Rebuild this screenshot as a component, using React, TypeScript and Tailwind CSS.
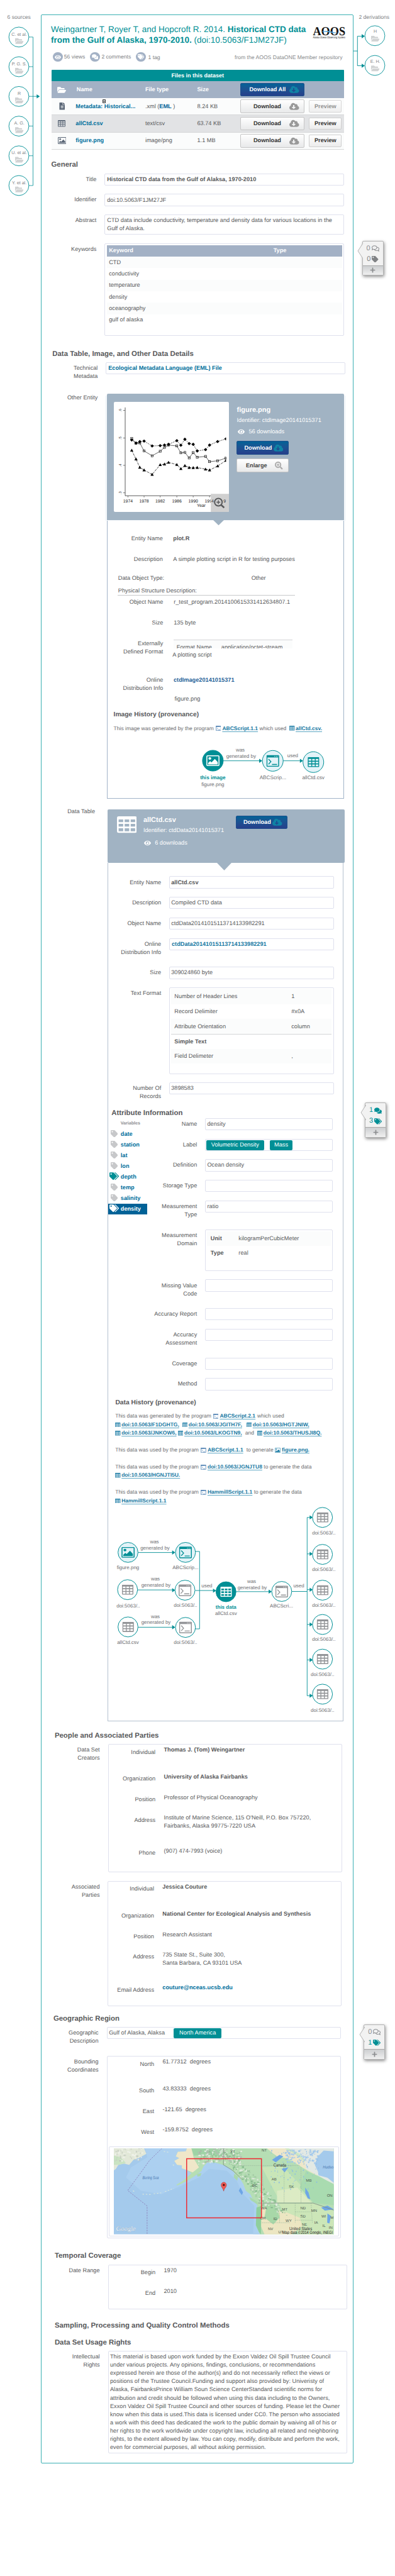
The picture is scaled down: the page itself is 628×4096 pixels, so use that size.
import React from "react";
import {
  FaFolderOpen, FaFileAlt, FaCloudDownloadAlt, FaEye, FaComments, FaRegComments, FaTag, FaTags, FaPlus, FaSearchPlus,
} from "react-icons/fa";

const TEAL = "#008f95";
const PALE = "#e3f3f8";
const GREY = "#939598";

type IconProps = { x?: number; y?: number; w: number; h?: number; color?: string; className?: string };

function GridIcon({ x, y, w, h, color = "currentColor", className }: IconProps) {
  return (
    <svg x={x} y={y} width={w} height={h ?? w} viewBox="0 0 24 24" preserveAspectRatio="none" className={className}>
      <path fill={color} fillRule="evenodd" d="M2 0H22Q24 0 24 2V22Q24 24 22 24H2Q0 24 0 22V2Q0 0 2 0ZM2 4.5V8.5H7.5V4.5ZM9.3 4.5V8.5H14.8V4.5ZM16.6 4.5V8.5H22V4.5ZM2 11V15H7.5V11ZM9.3 11V15H14.8V11ZM16.6 11V15H22V11ZM2 17.5V21.7H7.5V17.5ZM9.3 17.5V21.7H14.8V17.5ZM16.6 17.5V21.7H22V17.5Z" />
    </svg>
  );
}

function TerminalIcon({ x, y, w, h, color = "currentColor", className }: IconProps) {
  return (
    <svg x={x} y={y} width={w} height={h ?? w} viewBox="0 0 24 22" preserveAspectRatio="none" className={className}>
      <rect x="1" y="1" width="22" height="20" rx="1" fill="none" stroke={color} strokeWidth="1.8" />
      <rect x="1" y="1" width="22" height="3.6" fill={color} />
      <path d="M15 2.7h1.4M18 2.7h1.4M21 2.7h1" stroke="#fff" strokeWidth="1.2" />
      <path d="M4 7.5L8.5 12.3L4 17.2M10.5 17.6H20" fill="none" stroke={color} strokeWidth="1.6" />
    </svg>
  );
}

function PictureIcon({ x, y, w, h, color = "currentColor", className }: IconProps) {
  return (
    <svg x={x} y={y} width={w} height={h ?? w} viewBox="0 0 24 22" preserveAspectRatio="none" className={className}>
      <rect x="1" y="1" width="22" height="20" rx="1.2" fill="none" stroke={color} strokeWidth="1.8" />
      <circle cx="6.4" cy="6.4" r="2.6" fill={color} />
      <path d="M3.3 18.7V16L7 12L9.5 14.5L15.5 7.5L20.7 14V18.7Z" fill={color} />
    </svg>
  );
}

/* ---------- buttons ---------- */

function DownloadButton({ label, className, primary }: { label: string; className: string; primary?: boolean }) {
  return (
    <div
      className={
        "flex items-center justify-between rounded-[2px] border font-bold " +
        (primary
          ? "border-[#1f4f8c] bg-linear-to-b from-[#006297] to-[#263f8b] text-white "
          : "border-[#c6c6c6] bg-linear-to-b from-white to-[#e8e9ea] text-[#333] ") + className
      }
    >
      <span className="whitespace-nowrap">{label}</span>
      <FaCloudDownloadAlt className={"h-[12.5px] w-[15.5px] shrink-0 " + (primary ? "text-[#0f83a5]" : "text-[#999]")} />
    </div>
  );
}

function Preview({ faded }: { faded?: boolean }) {
  return (
    <div className={"ml-[7.4px] flex h-[19.4px] w-[52px] items-center justify-center rounded-[2px] border border-[#cfcfcf] bg-linear-to-b from-white to-[#ececec] font-bold " + (faded ? "text-[#777] opacity-80" : "text-[#333]")}>
      Preview
    </div>
  );
}

/* ---------- form rows ---------- */

function Field({ label, row, labelBox, box, children }: { label: React.ReactNode; row: string; labelBox: string; box: string; children?: React.ReactNode }) {
  return (
    <div className={"flex shrink-0 items-start " + row}>
      <div className={"shrink-0 pt-[3.1px] text-right " + labelBox}>{label}</div>
      <div className={"shrink-0 rounded-[2px] border border-[#dfe1ee] " + box}>{children}</div>
    </div>
  );
}

function Inner({ label, row, off, children }: { label: string; row: string; off: string; children: React.ReactNode }) {
  return (
    <div className={"flex items-start " + row}>
      <div className={"shrink-0 pt-[3.3px] text-right " + off}>{label}</div>
      <div className="ml-[13.3px]">{children}</div>
    </div>
  );
}

function Heading({ className, children }: { className: string; children: React.ReactNode }) {
  return <h2 className={"shrink-0 text-[11.4px] leading-[14px] font-bold whitespace-nowrap text-[#58595b] " + className}>{children}</h2>;
}

function Tag({ className, children }: { className: string; children: React.ReactNode }) {
  return <span className={"flex items-center justify-center rounded-[2px] bg-[#008f95] whitespace-nowrap text-white " + className}>{children}</span>;
}

function Prov({ icon, children, className = "" }: { icon: "t" | "g" | "p"; children: React.ReactNode; className?: string }) {
  return (
    <span className={"inline-flex items-center font-bold text-[#1779a3] " + className}>
      {icon === "t" && <TerminalIcon w={8.6} h={8} className="mr-[2px] text-[#2f6aa5]" />}
      {icon === "g" && <GridIcon w={8.4} h={7.6} className="mr-[1.6px]" />}
      {icon === "p" && <PictureIcon w={9} h={8} className="mr-[2px]" />}
      <span className="underline decoration-[#5fa8c4] underline-offset-[1.5px]">{children}</span>
    </span>
  );
}

/* ---------- diagram pieces ---------- */

function T({ x, y, s = 8, fill = "#6d6e71", anchor = "middle", bold, children }: { x: number; y: number; s?: number; fill?: string; anchor?: "middle" | "start" | "end"; bold?: boolean; children: string }) {
  return (
    <text x={x} y={y + s * 0.35} fontSize={s} fill={fill} textAnchor={anchor} fontWeight={bold ? 700 : 400}>
      {children}
    </text>
  );
}

function Head({ x, y }: { x: number; y: number }) {
  return <path d={`M${x - 5} ${y - 3.3}L${x} ${y}L${x - 5} ${y + 3.3}Z`} fill={TEAL} />;
}

function Node({ x, y, kind, tone = "plain", r = 15.9 }: { x: number; y: number; kind: "grid" | "term" | "pic"; tone?: "plain" | "pale" | "solid"; r?: number }) {
  const fill = tone === "solid" ? TEAL : tone === "pale" ? PALE : "#fff";
  const color = tone === "solid" ? "#fff" : tone === "pale" ? TEAL : GREY;
  return (
    <g>
      <circle cx={x} cy={y} r={r} fill={fill} stroke={TEAL} strokeWidth="1" />
      {kind === "grid" && <GridIcon x={x - 9} y={y - 8} w={18.4} h={16} color={color} />}
      {kind === "term" && <TerminalIcon x={x - 10.2} y={y - 9.3} w={20.4} h={18.8} color={color} />}
      {kind === "pic" && <PictureIcon x={x - 10.4} y={y - 8.5} w={21} h={17} color={color} />}
    </g>
  );
}

function Folder({ x, y, label, ly, fy }: { x: number; y: number; label: string; ly: number; fy: number }) {
  return (
    <g>
      <circle cx={x} cy={y} r="15.9" fill="#fff" stroke={TEAL} strokeWidth="0.9" />
      <T x={x + 0.6} y={ly} s={7.1} fill="#808285">{label}</T>
      <FaFolderOpen x={x - 6.2} y={fy - 6.8} size={13.6} color="#d1d3d4" />
    </g>
  );
}

/* ---------- comment / tag widgets ---------- */

function Widget({ comments, tags, className, top }: { comments: number; tags: number; className: string; top: string }) {
  const on = "text-[#008f95]";
  const off = "text-[#8c8e91]";
  return (
    <div className={"relative flex h-[55.6px] w-[34px] shrink-0 flex-col rounded-[2px] border border-[#b3b3b3] bg-[#f2f2f2] text-[11px] leading-[13px] shadow-[1px_2px_5px_rgba(0,0,0,0.45)] " + className}>
      <svg className={"absolute left-[-8.5px] " + top} width="9" height="24" viewBox="0 0 9 24">
        <path d="M9 0L1 12L9 24" fill="#f2f2f2" stroke="#b3b3b3" strokeWidth="1" />
      </svg>
      <div className={"mt-[4.5px] flex h-[14px] items-center justify-center gap-[2px] " + (comments ? on : off)}>
        <span>{comments}</span>
        {comments ? <FaComments size={12} /> : <FaRegComments size={12} />}
      </div>
      <div className={"mt-[3px] flex h-[14px] items-center justify-center gap-[2px] " + (tags ? on : "text-[#808285]")}>
        <span>{tags}</span>
        {tags ? <FaTags size={12} /> : <FaTag size={10.5} />}
      </div>
      <div className="mt-auto flex h-[15.5px] items-center justify-center border-t border-[#aaa] bg-linear-to-b from-[#cdcfd1] to-[#f0f0f0] text-[#8a8c8e]">
        <FaPlus size={9} />
      </div>
    </div>
  );
}

/* ---------- chart ---------- */

const cx = (v: number) => (v - 451) * 0.4005;
const cy = (v: number) => (v - 298) * 0.23363;
const XS = [522, 539, 554, 571, 603, 635, 652, 668, 701, 717, 733, 750, 766, 782, 815, 831, 863, 896];
const DIAMOND = [557, 578, 569, 565, 598, 596, 592, 587, 562, 593, 553, 582, 587, 632, 623, 592, 568, 550];
const SQUARE = [547, 580, 578, 632, 665, 634, 608, 592, 598, 645, 642, 680, 643, 675, 669, 705, 699, 681];
const TRIANGLE = [628, 688, 744, 762, 792, 726, 722, 710, 725, 753, 732, 745, 746, 745, 756, 762, 735, 697];
const line = (ys: number[]) => ys.map((y, i) => `${cx(XS[i])},${cy(y)}`).join(" ");

function Chart() {
  return (
    <svg width="183" height="175.7" viewBox="0 0 183 175.7" className="block">
      <path d={`M${cx(496)} ${cy(336)}V${cy(937)}H${cx(896)}`} fill="none" stroke="#333" strokeWidth="0.8" />
      {[356, 544, 730, 917].map((y, i) => (
        <g key={y}>
          <path d={`M${cx(488)} ${cy(y)}H${cx(496)}`} stroke="#555" strokeWidth="0.8" />
          <text transform={`translate(${cx(480)} ${cy(y)}) rotate(-90)`} fontSize="5.8" textAnchor="middle" fill="#222">{[".6", ".5", ".4", ".3"][i]}</text>
        </g>
      ))}
      {[507, 571, 635, 701, 766, 831, 896].map((x, i) => (
        <g key={x}>
          <path d={`M${cx(x)} ${cy(937)}V${cy(948)}`} stroke="#555" strokeWidth="0.8" />
          {i < 6 && <T x={cx(x)} y={cy(974)} s={6.9} fill="#222">{String(1974 + 4 * i)}</T>}
        </g>
      ))}
      <T x={cx(798)} y={cy(1002)} s={6.9} fill="#222">Year</T>
      <polyline points={line(DIAMOND)} fill="none" stroke="#222" strokeWidth="0.8" strokeDasharray="2 1.2" />
      <polyline points={line(SQUARE)} fill="none" stroke="#222" strokeWidth="0.7" />
      <polyline points={line(TRIANGLE)} fill="none" stroke="#222" strokeWidth="0.8" strokeDasharray="4 1.4" />
      {XS.map((x, i) => (
        <g key={x}>
          <rect x={cx(x) - 1.6} y={cy(SQUARE[i]) - 1.6} width={i === 17 ? 1.8 : 3.2} height="3.2" fill="none" stroke="#111" strokeWidth="0.7" />
          <path d={`M${cx(x)} ${cy(DIAMOND[i]) - 2.7}L${cx(x) + (i === 17 ? 0.3 : 2.7)} ${cy(DIAMOND[i])}L${cx(x)} ${cy(DIAMOND[i]) + 2.7}L${cx(x) - 2.7} ${cy(DIAMOND[i])}Z`} fill="#000" />
          <path d={`M${cx(x)} ${cy(TRIANGLE[i]) - 2.6}L${cx(x) + (i === 17 ? 0.3 : 2.6)} ${cy(TRIANGLE[i]) + 2}H${cx(x) - 2.6}Z`} fill="#000" />
        </g>
      ))}
      <rect x={cx(836)} y={cy(924)} width={28.8} height={30} fill="#d0d0d0" />
      <T x={cx(843)} y={cy(974)} s={6.9} fill="#444">4</T>
      <T x={cx(891)} y={cy(974)} s={6.9} fill="#333">9</T>
      <circle cx={cx(866)} cy={cy(981)} r="6" fill="#d0d0d0" stroke="#58595b" strokeWidth="2" />
      <path d={`M${cx(866) - 3} ${cy(981)}h6M${cx(866)} ${cy(981) - 3}v6`} stroke="#58595b" strokeWidth="1.4" />
      <path d={`M${cx(866) + 4.5} ${cy(981) + 4.5}L${cx(889)} ${cy(1018)}`} stroke="#58595b" strokeWidth="2.6" />
    </svg>
  );
}

/* ---------- map ---------- */

function speckles(n: number, seed: number, at: (t: number, u: number) => [number, number]) {
  let s = seed;
  const rnd = () => ((s = (s * 16807) % 2147483647) / 2147483647);
  return Array.from({ length: n }, () => {
    const [x, y] = at(rnd(), rnd() - 0.5);
    return { x, y, a: rnd() * 7 + 2, b: rnd() * 9 + 3 };
  });
}
const ROCKIES = speckles(260, 77, (t, u) => [900 + t * 190 + u * 95, 905 + t * 350 + u * 60]);
const RANGE = speckles(170, 913, (t, u) => [785 + t * 170, 940 - Math.sin(t * 3.1) * 15 + u * 80]);
const FAR = speckles(60, 41, (t, u) => [455 + t * 110, 925 + u * 70 - t * 10]);
const LAKES = speckles(90, 5, (t, u) => [1075 + t * 190, 890 + (u + 0.5) * 250]);
const NORTH = speckles(110, 17, (t, u) => [1130 + t * 130, 890 + (u + 0.5) * 80]);

function M({ x, y, s = 15, children, fill = "#44514a", italic, len }: { x: number; y: number; s?: number; children: string; fill?: string; italic?: boolean; len?: number }) {
  return (
    <text transform={`translate(${x} ${y}) scale(1 1.5)`} y={s * 0.35} fontSize={s} textAnchor="middle" fill={fill} fontStyle={italic ? "italic" : "normal"} textLength={len} lengthAdjust="spacingAndGlyphs">
      {children}
    </text>
  );
}

function RegionMap() {
  return (
    <svg width="349.6" height="136.7" viewBox="452 887 873 512" preserveAspectRatio="none" className="block">
      <rect x="452" y="887" width="873" height="512" fill="#a4caec" />
      <path d="M575 887L585 940L520 1000L500 1060L560 1140L640 1160L720 1110L790 1060L830 1010L900 1020L940 1080L960 1150L1010 1230L1005 1399H1040V887Z" fill="#acd0f0" />
      <path d="M452 887H572L581 920L556 940L530 955L513 985L492 978L470 985L460 1010L452 1018Z" fill="#e2e8d8" />
      <path d="M452 930L480 940L500 975L470 985L452 985Z" fill="#c9e3c2" />
      <path d="M742 887L738 905L706 908L698 935L712 945L692 962L703 985L722 988L722 1006L742 1016L760 1036L748 1052L728 1078L700 1104L705 1108L740 1084L775 1050L800 1022L808 995L822 972L850 970L885 985L905 998L928 1028L938 1052L952 1066L966 1100L976 1140L994 1160L1006 1200L1022 1225L1018 1262L1021 1310L1016 1345L1026 1380L1032 1399H1325V887Z" fill="#b6deb4" />
      <path d="M742 887L738 905L706 908L698 935L712 945L692 962L703 985L722 988L722 1006L742 1016L765 1030L790 1000L770 950L760 887Z" fill="#efe7c9" />
      <path d="M760 887L770 930L820 925L885 935L885 887Z" fill="#9fd3a6" />
      <path d="M1040 1000L1085 1130L1110 1200L1240 1210L1190 1100L1120 990Z" fill="#c9e6b8" />
      <path d="M1100 1140L1180 1120L1235 1210L1100 1210Z" fill="#dcebc4" />
      <path d="M1060 887L1085 920L1140 950L1190 990L1240 1040L1325 1110V887Z" fill="#cfe8c4" />
      <path d="M1060 887L1100 935L1150 950L1200 1000L1260 1050L1250 1020L1180 930L1130 887Z" fill="#efe7c9" />
      <path d="M1145 887L1190 920L1210 960L1215 1010L1260 1045L1325 1105V887Z" fill="#e3e9e4" />
      <path d="M1215 1020L1260 1050L1325 1100V1225L1245 1212L1190 1120Z" fill="#a9dbb0" />
      <path d="M1325 905L1285 900L1262 935L1250 985L1262 1025L1265 1048L1300 1062L1325 1092Z" fill="#a4caec" />
      <path d="M1105 1215H1250L1325 1260V1399H1190Z" fill="#cce6b8" />
      <path d="M1022 1250L1060 1235L1140 1270L1190 1300L1200 1350L1160 1399H1050L1030 1330Z" fill="#ece6c2" />
      <path d="M1060 1215L1100 1230L1110 1300L1085 1340L1050 1300Z" fill="#a8d8a8" />
      <path d="M1018 1240L1038 1230L1036 1399L1028 1385L1016 1345Z" fill="#8fcf9d" />
      {ROCKIES.map((p, i) => <rect key={i} x={p.x} y={p.y} width={p.a} height={p.b} fill={i % 3 === 0 ? "#e6ebe3" : i % 3 === 1 ? "#7fb58a" : "#a3c9a4"} opacity="0.8" />)}
      {RANGE.map((p, i) => <rect key={i} x={p.x} y={p.y} width={p.a} height={p.b} fill={i % 3 === 0 ? "#b4bab2" : i % 3 === 1 ? "#eef0ec" : "#8fbd92"} opacity="0.85" />)}
      {FAR.map((p, i) => <rect key={i} x={p.x} y={p.y} width={p.a} height={p.b} fill={i % 2 ? "#c2c9bd" : "#f4f5ef"} opacity="0.7" />)}
      {LAKES.map((p, i) => <rect key={i} x={p.x} y={p.y} width={p.a * 0.5} height={p.b * 0.9} fill="#86b9ea" opacity="0.8" />)}
      {NORTH.map((p, i) => <rect key={i} x={p.x} y={p.y} width={p.a * 0.9} height={p.b} fill="#9cc6ee" opacity="0.8" />)}
      <path d="M1080 955L1110 925L1125 935L1095 970ZM1118 1010L1145 1000L1130 1030ZM1212 1120L1225 1150L1232 1190L1222 1185L1212 1155ZM1275 1240L1300 1228L1325 1250L1290 1258ZM1300 1275L1314 1290L1308 1335L1299 1330ZM955 1120L965 1150L960 1165L948 1140Z" fill="#6ea6e6" />
      <path d="M990 1175L1022 1205L1024 1222L995 1195ZM930 1040L945 1055L942 1080L928 1060ZM782 1040L800 1034L796 1052L784 1056Z" fill="#a9d8ad" />
      <path d="M566 1160L600 1162M610 1158L640 1152M655 1145L690 1125M528 1140L536 1146M650 905L668 910M686 985L695 990" stroke="#dce8dc" strokeWidth="4" strokeDasharray="6 7" fill="none" />
      <path d="M643 887L594 958L555 1040L507 1138L584 1230V1399" fill="none" stroke="#8a78b4" strokeWidth="0.8" strokeDasharray="2.4 1.6" vectorEffect="non-scaling-stroke" />
      <path d="M887 887V985L925 1020L960 1070M1025 1213H1243L1325 1255" fill="none" stroke="#7c8a80" strokeWidth="0.8" vectorEffect="non-scaling-stroke" />
      <path d="M925 990H1190M1040 990L1045 1120M1128 990V1213M1195 1000V1213M1172 1213V1330M1172 1265H1235M1172 1315H1240M1235 1213L1240 1330M1040 1330H1150M1110 1270V1330" fill="none" stroke="#9ab79c" strokeWidth="0.6" strokeDasharray="2 1" vectorEffect="non-scaling-stroke" />
      <M x={598} y={1061} s={17} italic fill="#4a78b0" len={65}>Bering Sea</M>
      <M x={1303} y={998} s={16} italic fill="#4a78b0" len={42}>Hudso</M>
      <M x={1111} y={988} s={18} fill="#333" len={51}>Canada</M>
      <M x={1194} y={1364} s={18} fill="#333" len={90}>United States</M>
      <M x={924} y={904}>YT</M>
      <M x={1049} y={897}>NT</M>
      <M x={1088} y={1070}>AB</M>
      <M x={1226} y={1076}>MB</M>
      <M x={1012} y={1109}>BC</M>
      <M x={1157} y={1115}>SK</M>
      <M x={1309} y={1168}>ON</M>
      <M x={1048} y={1244}>WA</M>
      <M x={1131} y={1250}>MT</M>
      <M x={1203} y={1242}>ND</M>
      <M x={1247} y={1258}>MN</M>
      <M x={1203} y={1293}>SD</M>
      <M x={1285} y={1291}>WI</M>
      <M x={1044} y={1301}>OR</M>
      <M x={1093} y={1308}>ID</M>
      <M x={1146} y={1316}>WY</M>
      <M x={1209} y={1338}>NE</M>
      <M x={1255} y={1330}>IA</M>
      <M x={1286} y={1346}>IL</M>
      <M x={1313} y={1358}>IN</M>
      <M x={1074} y={1365}>NV</M>
      <M x={1115} y={1386}>UT</M>
      <M x={1318} y={1301} s={14}>M</M>
      <M x={1221} y={1388} s={17} fill="#222" len={200}>Map data ©2014 Google, INEGI</M>
      <rect x="741" y="949" width="297" height="352" fill="none" stroke="#ee2a33" strokeWidth="1.5" vectorEffect="non-scaling-stroke" />
      <path d="M888 1142C887 1125 878 1120 878 1106A10.5 17 0 0 1 899 1106C899 1120 889 1125 888 1142Z" fill="#ee5a55" stroke="#b8322e" strokeWidth="0.6" vectorEffect="non-scaling-stroke" />
      <ellipse cx="888.5" cy="1105" rx="4" ry="6" fill="#4f1210" />
      <text transform="translate(500 1378) scale(1 1.4)" fontSize="27" textAnchor="middle" fill="#fff" stroke="#7c93a8" strokeWidth="0.5" textLength="78" className="font-['Liberation_Serif',serif]">Google</text>
    </svg>
  );
}

/* ---------- page ---------- */

const LINK = "font-bold text-[#006f9c]";
const F1 = "ml-[13px] min-h-[19.2px] w-[380.5px] px-[2.8px] py-[2.1px]";
const F2 = "ml-[12.4px] min-h-[19.2px] w-[262px] px-[2.6px] py-[2.1px]";
const F3 = "ml-[13.2px] min-h-[19.2px] w-[202.2px] px-[2px] py-[2.1px]";
const L3 = "w-[85px]";

const FILES = [
  { icon: <FaFileAlt className="h-[11.5px] w-[9.5px]" />, name: "Metadata: Historical...", type: ".xml (", size: "8.24 KB", bg: "bg-[#fbfcfc]" },
  { icon: <GridIcon w={12} h={10.4} />, name: "allCtd.csv", type: "text/csv", size: "63.74 KB", bg: "bg-[#e2e3e5]" },
  { icon: <PictureIcon w={13.6} h={11} />, name: "figure.png", type: "image/png", size: "1.1 MB", bg: "bg-[#fbfcfc]" },
];

export default function App() {
  return (
    <div className="flex h-[4096px] w-[628px] items-start overflow-hidden bg-white font-['Liberation_Sans',Arial,sans-serif] text-[9.2px] leading-[13.08px] text-[#58595b] [text-rendering:geometricPrecision]">
      <aside className="w-[65px] shrink-0">
        <svg width="65" height="320" viewBox="0 0 65 320" className="block">
          <T x={30.2} y={27} s={8.6} fill="#808285">6 sources</T>
          <path d="M46 58.9H52.5V295H46M46 106H52.5M46 153.2H60M46 200.4H52.5M46 247.7H52.5" fill="none" stroke={TEAL} strokeWidth="0.8" />
          <Head x={63.3} y={153.2} />
          {["C. et al.", "P. G. S.", "R", "A. G.", "U. et al.", "Y. et al."].map((n, i) => (
            <Folder key={n} x={30} y={58.9 + 47.22 * i} ly={54.1 + 47.22 * i} fy={65.2 + 47.22 * i} label={n} />
          ))}
        </svg>
      </aside>

      <main className="mt-[23px] flex h-[3893.5px] w-[497px] shrink-0 flex-col rounded-[2px] border border-[#3bb0b3]">
        <header className="h-[87px] shrink-0 pt-[14px] pl-[15px]">
          <div className="flex items-start">
            <h1 className="w-[412px] shrink-0 text-[13.5px] leading-[17px] whitespace-nowrap text-[#008f95]">
              Weingartner T, Royer T, and Hopcroft R. 2014. <b>Historical CTD data</b>
              <br />
              <b>from the Gulf of Alaska, 1970-2010.</b> (doi:10.5063/F1JM27JF)
            </h1>
            <svg width="54" height="28" viewBox="0 -4 54 28" className="mt-[-0.5px] ml-[4px] overflow-visible">
              <text x="0.5" y="14" fontSize="19.5" fontWeight="700" fill="#111" textLength="51.5" lengthAdjust="spacingAndGlyphs" className="font-['Liberation_Serif',serif]">AOOS</text>
              <path d="M13 8.6Q22 5.8 31 8.6T46 8.4Q38 12 30 10T13 8.6Z" fill="#5aa7dc" />
              <text x="0.5" y="19.2" fontSize="4.6" fill="#111" textLength="51.5" lengthAdjust="spacingAndGlyphs">Alaska Ocean Observing System</text>
            </svg>
          </div>
          <div className="mt-[10.5px] flex h-[16px] items-center text-[8.6px] text-[#808285]">
            <span className="ml-[3.2px] flex size-[15.6px] items-center justify-center rounded-full bg-[#a3b1c5] text-white"><FaEye size={10} /></span>
            <span className="ml-[2px] w-[41.5px]">56 views</span>
            <span className="flex size-[15.6px] items-center justify-center rounded-full bg-[#a3b1c5] text-white"><FaComments size={10.5} /></span>
            <span className="ml-[2.5px] w-[55px]">2 comments</span>
            <span className="flex size-[15.6px] items-center justify-center rounded-full bg-[#a3b1c5] text-white"><FaTags size={10.5} /></span>
            <span className="ml-[3.5px] pt-[2px]">1 tag</span>
            <span className="ml-auto pt-[2px] pr-[16.5px] text-[#8a8c8e]">from the AOOS DataONE Member repository</span>
          </div>
        </header>

        <section className="relative ml-[15.7px] w-[465px] shrink-0">
          <div className="flex h-[18.1px] items-center justify-center rounded-t-[1px] bg-[#008f95] text-[9px] font-bold text-white">Files in this dataset</div>
          <div className="flex h-[26.9px] items-center bg-[#a3b1c5] font-bold text-white">
            <span className="flex w-[33.6px] justify-center"><FaFolderOpen size={14} /></span>
            <span className="w-[115.6px] pl-[6.5px]">Name</span>
            <span className="w-[82.6px]">File type</span>
            <span className="w-[68.5px]">Size</span>
            <DownloadButton primary label="Download All" className="h-[21.6px] w-[102px] pr-[7px] pl-[13.5px]" />
          </div>
          {FILES.map((f, i) => (
            <div key={f.name} className={"flex h-[27.35px] items-center border-b border-[#d6d7d8] " + f.bg}>
              <span className="flex w-[33.6px] justify-center text-[#5c6878]">{f.icon}</span>
              <span className={"w-[115.6px] pl-[5px] whitespace-nowrap " + LINK}>{f.name}</span>
              <span className="w-[82.6px]">
                {f.type}
                {i === 0 && <><b className="text-[#006297]">EML</b> )</>}
              </span>
              <span className="w-[68.5px]">{f.size}</span>
              <DownloadButton label="Download" className="h-[21.6px] w-[102px] pr-[7px] pl-[20px]" />
              <Preview faded={i === 0} />
            </div>
          ))}
          <svg width="5" height="6" viewBox="0 0 5 6" className="absolute top-[47px] left-[81.7px]">
            <path d="M0.5 0.5H4.5V5.5H0.5ZM1.5 1.8L3.5 4.2M3.5 1.8L1.5 4.2" fill="none" stroke="#000" strokeWidth="0.8" />
          </svg>
        </section>

        <Heading className="mt-[17.2px] h-[20.3px] pl-[15.5px]">General</Heading>
        <Field label="Title" row="h-[32.7px]" labelBox="w-[87.4px]" box={F1}><b>Historical CTD data from the Gulf of Alaksa, 1970-2010</b></Field>
        <Field label="Identifier" row="h-[32.7px]" labelBox="w-[87.4px]" box={F1 + " pt-[2.6px]"}>doi:10.5063/F1JM27JF</Field>
        <Field label="Abstract" row="h-[45.8px]" labelBox="w-[87.4px]" box={F1 + " h-[32.3px]"}>
          <div className="text-[9.28px] whitespace-nowrap">CTD data include conductivity, temperature and density data for various locations in the<br />Gulf of Alaska.</div>
        </Field>
        <Field label="Keywords" row="h-[169px]" labelBox="w-[87.4px]" box="ml-[13px] h-[147.5px] w-[380.5px] px-[2.2px] pt-[2.1px]">
          <div className="flex h-[18.3px] items-center bg-[#a3b1c5] pl-[3.6px] font-bold text-white">
            <span className="w-[261.5px]">Keyword</span>
            <span>Type</span>
          </div>
          {["CTD", "conductivity", "temperature", "density", "oceanography", "gulf of alaska"].map((k, i) => (
            <div key={k} className={"flex h-[18.3px] items-center pl-[3.6px] " + (i % 2 ? "" : "bg-[#fbfcfc]")}>{k}</div>
          ))}
        </Field>

        <Heading className="h-[20.1px] pl-[17.3px]">Data Table, Image, and Other Data Details</Heading>
        <Field label={<>Technical<br />Metadata</>} row="h-[50.7px]" labelBox="w-[89.4px]" box={F1}><span className={LINK}>Ecological Metadata Language (EML) File</span></Field>

        <div className="flex h-[660.5px] shrink-0 items-start">
          <div className="w-[89.4px] shrink-0 text-right leading-[12px]">Other Entity</div>
          <section className="ml-[14.8px] flex h-[644px] w-[377px] flex-col">
            <div className="relative flex h-[201px] shrink-0 items-start rounded-t-[2px] bg-[#a1b3c3] pt-[12.2px] pl-[10.4px] shadow-[-4px_2px_0_-1px_#f5f8fb,4px_2px_0_-1px_#f5f8fb]">
              <div className="h-[175.7px] w-[183px] overflow-hidden rounded-[2px] bg-white"><Chart /></div>
              <div className="ml-[12.9px] pt-[6.2px] text-white">
                <div className="text-[11px] leading-[14px] font-bold">figure.png</div>
                <div className="mt-[3.2px]">Identifier: ctdImage20141015371</div>
                <div className="mt-[5.3px] flex items-center"><FaEye size={11} className="ml-[1.5px]" /><span className="ml-[6.5px]">56 downloads</span></div>
                <DownloadButton primary label="Download" className="mt-[8px] h-[21.3px] w-[82.5px] pr-[7.5px] pl-[11px]" />
                <div className="mt-[6.7px] flex h-[21.8px] w-[82.5px] items-center justify-between rounded-[2px] border border-[#c6c6c6] bg-linear-to-b from-white to-[#e8e9ea] pr-[8px] pl-[13.5px] font-bold text-[#444]">
                  Enlarge<FaSearchPlus size={12.5} className="text-[#aaa]" />
                </div>
              </div>
              <svg width="17" height="8.3" viewBox="0 0 17 8.3" className="absolute top-[200.8px] left-[168.6px]"><path d="M0 0H17L8.5 8.3Z" fill="#a1b3c3" /></svg>
            </div>
            <div className="flex w-[376.4px] grow flex-col border-x border-b border-[#a1b3c8] pt-[22.4px]">
              <div className="flex h-[32.7px]"><span className="w-[87.6px] text-right">Entity Name</span><b className="ml-[16.5px]">plot.R</b></div>
              <div className="flex h-[30.1px]"><span className="w-[87.6px] text-right">Description</span><span className="ml-[16.5px]">A simple plotting script in R for testing purposes</span></div>
              <div className="flex h-[20.1px] pl-[16.6px]"><span className="w-[211.9px]">Data Object Type:</span><span>Other</span></div>
              <div className="ml-[16px] h-[14.5px] w-[282px] border-b border-[#c8c9cb]"><span className="pl-[0.6px]">Physical Structure Description:</span></div>
              <div className="mt-[4.2px] flex h-[32.5px] shrink-0"><span className="w-[88.2px] text-right">Object Name</span><span className="ml-[16.8px]">r_test_program.2014100615331412634807.1</span></div>
              <div className="flex h-[32.7px] shrink-0"><span className="w-[88.2px] text-right">Size</span><span className="ml-[16.8px]">135 byte</span></div>
              <div className="flex h-[58.2px] shrink-0">
                <span className="w-[88.2px] shrink-0 text-right">Externally<br />Defined Format</span>
                <div className="ml-[16.4px]">
                  <div className="flex h-[14.9px] w-[189px] overflow-hidden border-t border-[#d5d6d8] bg-[#fbfcfc] pt-[5px] pl-[5px]"><span className="w-[71px]">Format Name</span><span>application/octet-stream</span></div>
                  <div className="mt-[3.5px] ml-[-1.6px]">A plotting script</div>
                </div>
              </div>
              <div className="flex h-[30.1px] shrink-0"><span className="w-[88.2px] shrink-0 text-right">Online<br />Distribution Info</span><b className="ml-[16.6px] text-[#1f5f98]">ctdImage20141015371</b></div>
              <div className="h-[25.2px] shrink-0 pl-[106.3px]">figure.png</div>
              <h3 className="shrink-0 pl-[9.4px] text-[10.3px] leading-[14px] font-bold">Image History (provenance)</h3>
              <p className="mt-[7.5px] flex shrink-0 items-center pl-[9.4px] text-[8.5px] whitespace-nowrap text-[#6d6e71]">
                This image was generated by the program<Prov icon="t" className="ml-[3px]">ABCScript.1.1</Prov><span className="ml-[2.5px]">which used</span><Prov icon="g" className="ml-[5px]">allCtd.csv.</Prov>
              </p>
              <svg width="374" height="104" viewBox="171 1165 374 104" className="block shrink-0">
                <path d="M355 1209.7H413M450 1209.7H480" stroke={TEAL} strokeWidth="0.9" />
                <Head x={417} y={1209.7} />
                <Head x={481.8} y={1209.7} />
                <Node x={338.4} y={1209.5} r={16.5} kind="pic" tone="solid" />
                <Node x={433.7} y={1209.8} r={16.5} kind="term" tone="pale" />
                <Node x={498.2} y={1211.8} r={16.5} kind="grid" tone="pale" />
                <T x={382} y={1191.8}>was</T>
                <T x={383.5} y={1202} s={8.1}>generated by</T>
                <T x={465.4} y={1201}>used</T>
                <T x={338.4} y={1236.1} bold fill={TEAL} s={8.2}>this image</T>
                <T x={338.4} y={1246.8} s={8.2}>figure.png</T>
                <T x={433.8} y={1236.1} s={8.2}>ABCScrip...</T>
                <T x={498.2} y={1236.1} s={8.2}>allCtd.csv</T>
              </svg>
            </div>
          </section>
        </div>

        <div className="flex h-[1466px] shrink-0 items-start">
          <div className="mt-[-2.8px] w-[85px] shrink-0 text-right">Data Table</div>
          <section className="ml-[19.6px] flex h-[1450.4px] w-[377px] flex-col">
            <div className="relative flex h-[84.8px] shrink-0 items-start rounded-[2px] bg-[#a1b3c3] pl-[15.4px] text-white">
              <GridIcon w={31.5} h={26.2} className="mt-[11.4px]" />
              <div className="ml-[10.4px] w-[147px] pt-[10px]">
                <div className="text-[11px] leading-[14px] font-bold">allCtd.csv</div>
                <div className="mt-[3.4px]">Identifier: ctdData20141015371</div>
                <div className="mt-[6.5px] flex items-center"><FaEye size={11} className="ml-[1.3px]" /><span className="ml-[6px]">6 downloads</span></div>
              </div>
              <DownloadButton primary label="Download" className="mt-[9.6px] h-[21.4px] w-[82.5px] pr-[7.5px] pl-[11px]" />
              <svg width="23" height="12" viewBox="0 0 23 12" className="absolute top-[84.6px] left-[174.6px]"><path d="M0 0H23L11.5 12Z" fill="#a1b3c3" /></svg>
            </div>
            <div className="flex w-[375.8px] grow flex-col border-x border-b border-[#b4c1cf] pt-[21.7px]">
              <Field label="Entity Name" row="h-[32.7px]" labelBox="w-[84.6px]" box={F2}><b>allCtd.csv</b></Field>
              <Field label="Description" row="h-[32.7px]" labelBox="w-[84.6px]" box={F2}>Compiled CTD data</Field>
              <Field label="Object Name" row="h-[32.7px]" labelBox="w-[84.6px]" box={F2}>ctdData20141015113714133982291</Field>
              <Field label={<>Online<br />Distribution Info</>} row="h-[45.8px]" labelBox="w-[84.6px]" box={F2}><span className="pl-[0.8px] font-bold text-[#1779a3]">ctdData20141015113714133982291</span></Field>
              <Field label="Size" row="h-[32.8px]" labelBox="w-[84.6px]" box={F2}>309024860 byte</Field>
              <Field label="Text Format" row="h-[151.1px]" labelBox="w-[84.6px]" box="ml-[12.4px] h-[137.6px] w-[262px] px-[2.4px] pt-[2px]">
                {[["Number of Header Lines", "1"], ["Record Delimiter", "#x0A"], ["Attribute Orientation", "column"]].map(([a, b], i) => (
                  <div key={a} className={"flex h-[23.6px] items-center pl-[5.4px] " + (i % 2 ? "" : "bg-[#fbfcfc]")}><span className="w-[185.9px]">{a}</span><span>{b}</span></div>
                ))}
                <div className="flex h-[24px] items-center border-t border-[#d5d6d8] pl-[5.4px] font-bold">Simple Text</div>
                <div className="flex h-[23.6px] items-center bg-[#fbfcfc] pl-[5.4px]"><span className="w-[185.9px]">Field Delimeter</span><span>,</span></div>
              </Field>
              <Field label={<>Number Of<br />Records</>} row="h-[41.4px]" labelBox="w-[84.6px]" box={F2}>3898583</Field>
              <h3 className="h-[15.4px] shrink-0 pl-[5.6px] text-[11.4px] leading-[14px] font-bold">Attribute Information</h3>
              <div className="flex h-[446.5px] shrink-0 items-start">
                <div className="w-[56.7px] shrink-0 pt-[2px]">
                  <div className="h-[15px] pl-[20.2px] text-[7.1px] font-bold text-[#8a8c8e]">Variables</div>
                  {["date", "station", "lat", "lon", "depth", "temp", "salinity", "density"].map((v) => (
                    <div key={v} className={"flex h-[17px] w-[62px] items-center font-bold " + (v === "density" ? "bg-[#006297] text-white" : "text-[#006f9c]")}>
                      <span className={"mr-[0.6px] flex w-[19.6px] justify-center pb-[2px] " + (v === "depth" ? "text-[#008f95]" : v === "density" ? "text-white" : "text-[#c7c8ca]")}>
                        {v === "depth" || v === "density" ? <FaTags className="h-[12.4px] w-[15px]" /> : <FaTag size={11.5} />}
                      </span>
                      {v}
                    </div>
                  ))}
                </div>
                <div className="flex flex-col">
                  <Field label="Name" row="h-[32.7px]" labelBox={L3} box={F3}>density</Field>
                  <Field label="Label" row="h-[32.7px]" labelBox={L3} box="ml-[13.2px] flex h-[19.2px] w-[202.2px] items-start px-[0.2px] pt-[1.3px]">
                    <Tag className="h-[15.9px] w-[92.4px]">Volumetric Density</Tag>
                    <Tag className="ml-[8.6px] h-[15.9px] w-[36.8px]">Mass</Tag>
                  </Field>
                  <Field label="Definition" row="h-[32.7px]" labelBox={L3} box={F3}>Ocean density</Field>
                  <Field label="Storage Type" row="h-[32.7px]" labelBox={L3} box={F3} />
                  <Field label={<>Measurement<br />Type</>} row="h-[45.8px]" labelBox={L3} box={F3}>ratio</Field>
                  <Field label={<>Measurement<br />Domain</>} row="h-[79.9px]" labelBox={L3} box="ml-[13.2px] h-[66.1px] w-[202.2px] px-[2px] pt-[2px]">
                    <div className="flex h-[23.6px] items-center bg-[#fbfcfc] pl-[5.4px]"><b className="w-[44.5px]">Unit</b><span>kilogramPerCubicMeter</span></div>
                    <div className="flex h-[23.6px] items-center pl-[5.4px]"><b className="w-[44.5px]">Type</b><span>real</span></div>
                  </Field>
                  <Field label={<>Missing Value<br />Code</>} row="h-[45.8px]" labelBox={L3} box={F3} />
                  <Field label="Accuracy Report" row="h-[32.7px]" labelBox={L3} box={F3} />
                  <Field label={<>Accuracy<br />Assessment</>} row="h-[45.8px]" labelBox={L3} box={F3} />
                  <Field label="Coverage" row="h-[32.7px]" labelBox={L3} box={F3} />
                  <Field label="Method" row="h-[33px]" labelBox={L3} box={F3} />
                </div>
              </div>
              <h3 className="h-[20.6px] shrink-0 pl-[11.8px] text-[10.3px] leading-[14px] font-bold">Data History (provenance)</h3>
              <div className="flex h-[148px] shrink-0 flex-col pl-[11.6px] text-[8.5px] leading-[13.5px] whitespace-nowrap text-[#6d6e71]">
                <p className="flex h-[13.5px] items-center">This data was generated by the program<Prov icon="t" className="ml-[3px]">ABCScript.2.1</Prov><span className="ml-[3px]">which used</span></p>
                <p className="flex h-[13.5px] items-center"><Prov icon="g">doi:10.5063/F1DGHTG,</Prov><Prov icon="g" className="ml-[5px]">doi:10.5063/JGITH7F,</Prov><Prov icon="g" className="ml-[7px]">doi:10.5063/HGTJNIW,</Prov></p>
                <p className="flex h-[13.5px] items-center"><Prov icon="g">doi:10.5063/JNKOW6,</Prov><Prov icon="g" className="ml-[2.5px]">doi:10.5063/LKOGTN9,</Prov><span className="ml-[5px]">and</span><Prov icon="g" className="ml-[5px]">doi:10.5063/THUSJI8Q.</Prov></p>
                <p className="mt-[13.3px] flex h-[13.5px] items-center">This data was used by the program<Prov icon="t" className="ml-[3.4px]">ABCScript.1.1</Prov><span className="ml-[5px]">to generate</span><Prov icon="p" className="ml-[2.4px]">figure.png.</Prov></p>
                <p className="mt-[13.4px] flex h-[13.5px] items-center">This data was used by the program<Prov icon="t" className="ml-[3.4px]">doi:10.5063/JGNJTU8</Prov><span className="ml-[2.4px]">to generate the data</span></p>
                <p className="flex h-[13.5px] items-center"><Prov icon="g">doi:10.5063/HGNJTI5U.</Prov></p>
                <p className="mt-[13.3px] flex h-[13.5px] items-center">This data was used by the program<Prov icon="t" className="ml-[3.4px]">HammillScript.1.1</Prov><span className="ml-[2.4px]">to generate the data</span></p>
                <p className="flex h-[13.5px] items-center"><Prov icon="g">HammillScript.1.1</Prov></p>
              </div>
              <svg width="373" height="343" viewBox="171.5 2393.2 373 343" className="block shrink-0">
                <path d="M219 2468.8H275M218 2528.3H275M219 2587.6H275M310 2467.1H316.8V2590.2H310M310 2529.2H340M375 2531H428M463 2530.7H487.8M494 2413H487.8V2696.5H494M487.8 2471H494M487.8 2527.9H494M487.8 2583.2H494M487.8 2639.6H494" fill="none" stroke={TEAL} strokeWidth="0.9" />
                {[2468.8, 2528.7, 2587.6].map((y) => <Head key={y} x={278.2} y={y} />)}
                <Head x={343.2} y={2529.4} />
                <Head x={431.6} y={2531} />
                {[2413, 2471, 2527.9, 2583.2, 2639.6, 2696.5].map((y) => <Head key={y} x={496.8} y={y} />)}
                <Node x={203} y={2468.6} kind="pic" tone="pale" />
                <Node x={294.4} y={2468.6} kind="term" tone="pale" />
                <Node x={202.3} y={2527.9} kind="grid" />
                <Node x={293.6} y={2528.7} kind="term" />
                <Node x={203} y={2587.1} kind="grid" />
                <Node x={294.4} y={2587.9} kind="term" />
                <Node x={358.8} y={2531.2} kind="grid" tone="solid" />
                <Node x={447.4} y={2530.7} kind="term" />
                {[2413, 2471.8, 2528.7, 2583.2, 2638.3, 2694].map((y) => <Node key={y} x={512.2} y={y} kind="grid" />)}
                <T x={245} y={2451}>was</T><T x={246} y={2461}>generated by</T>
                <T x={246.5} y={2510.6}>was</T><T x={247.5} y={2520.4}>generated by</T>
                <T x={246.5} y={2570}>was</T><T x={247.5} y={2579.9}>generated by</T>
                <T x={399.5} y={2514.4}>was</T><T x={400.5} y={2524.3}>generated by</T>
                <T x={328.4} y={2521.7}>used</T><T x={474.6} y={2521.7}>used</T>
                <T x={203} y={2492.2}>figure.png</T><T x={294.4} y={2492.2}>ABCScrip...</T>
                <T x={203.4} y={2553}>doi:5063/..</T><T x={294.4} y={2552.2}>doi:5063/..</T>
                <T x={203} y={2611.2}>allCtd.csv</T><T x={294.4} y={2611.2}>doi:5063/..</T>
                <T x={358.8} y={2555} bold fill={TEAL}>this data</T><T x={358.8} y={2565}>allCtd.csv</T>
                <T x={447} y={2553.8}>ABCScri...</T>
                {[2437.1, 2495.3, 2552.2, 2606].map((y) => <T key={y} x={514.4} y={y}>doi:5063/..</T>)}
                {[2662.9, 2719].map((y) => <T key={y} x={512.2} y={y}>doi:5063/..</T>)}
              </svg>
            </div>
          </section>
        </div>

        <Heading className="h-[20.1px] pl-[20.9px]">People and Associated Parties</Heading>
        <Field label={<>Data Set<br />Creators</>} row="h-[217.9px]" labelBox="w-[92.6px]" box="ml-[13.2px] h-[204.2px] w-[372px] pt-[2.2px]">
          <Inner label="Individual" off="w-[74.4px]" row="h-[42.6px]"><b>Thomas J. (Tom) Weingartner</b></Inner>
          <Inner label="Organization" off="w-[74.4px]" row="h-[32.7px]"><b>University of Alaska Fairbanks</b></Inner>
          <Inner label="Position" off="w-[74.4px]" row="h-[32.7px]">Professor of Physical Oceanography</Inner>
          <Inner label="Address" off="w-[74.4px]" row="h-[52.3px]">Institute of Marine Science, 115 O'Neill, P.O. Box 757220,<br />Fairbanks, Alaska 99775-7220 USA</Inner>
          <Inner label="Phone" off="w-[74.4px]" row="h-[20px]">(907) 474-7993 (voice)</Inner>
        </Field>
        <Field label={<>Associated<br />Parties</>} row="h-[212.2px]" labelBox="w-[92.6px]" box="ml-[12.4px] h-[198.9px] w-[372px] pt-[2.2px]">
          <Inner label="Individual" off="w-[73px]" row="h-[42.7px]"><b>Jessica Couture</b></Inner>
          <Inner label="Organization" off="w-[73px]" row="h-[32.7px]"><b>National Center for Ecological Analysis and Synthesis</b></Inner>
          <Inner label="Position" off="w-[73px]" row="h-[32.7px]">Research Assistant</Inner>
          <Inner label="Address" off="w-[73px]" row="h-[52.2px]">735 State St., Suite 300,<br />Santa Barbara, CA 93101 USA</Inner>
          <Inner label="Email Address" off="w-[73px]" row="h-[20px]"><span className={LINK}>couture@nceas.ucsb.edu</span></Inner>
        </Field>

        <Heading className="h-[20.1px] pl-[18.9px]">Geographic Region</Heading>
        <Field label={<>Geographic<br />Description</>} row="h-[45.9px]" labelBox="w-[90.6px]" box="ml-[13.2px] flex h-[19.2px] w-[372.2px] items-center pl-[2.4px]">
          <span className="w-[103px]">Gulf of Alaska, Alaksa</span>
          <Tag className="h-[16px] w-[76px]">North America</Tag>
        </Field>
        <Field label={<>Bounding<br />Coordinates</>} row="h-[311.3px]" labelBox="w-[90.6px]" box="ml-[13.2px] h-[289.7px] w-[372.2px] pt-[2.2px]">
          <Inner label="North" off="w-[74.3px]" row="h-[42.5px]">61.77312 &nbsp;degrees</Inner>
          <Inner label="South" off="w-[74.3px]" row="h-[32.8px]">43.83333 &nbsp;degrees</Inner>
          <Inner label="East" off="w-[74.3px]" row="h-[32.7px]">-121.65 &nbsp;degrees</Inner>
          <Inner label="West" off="w-[74.3px]" row="h-[32.8px]">-159.8752 &nbsp;degrees</Inner>
          <div className="ml-[2.2px] h-[142.6px] w-[366px] rounded-[2px] border border-[#dfe1ee] pt-[2px] pl-[7.1px]"><RegionMap /></div>
        </Field>

        <Heading className="h-[20.4px] pl-[20.9px]">Temporal Coverage</Heading>
        <Field label="Date Range" row="h-[90.7px]" labelBox="w-[92.6px]" box="ml-[13.2px] h-[71.2px] w-[380px] pt-[2.1px]">
          <Inner label="Begin" off="w-[74.4px]" row="h-[32.8px]">1970</Inner>
          <Inner label="End" off="w-[74.4px]" row="h-[20px]">2010</Inner>
        </Field>

        <Heading className="h-[26.2px] pl-[20.9px]">Sampling, Processing and Quality Control Methods</Heading>
        <Heading className="h-[20.5px] pl-[20.9px]">Data Set Usage Rights</Heading>
        <Field label={<>Intellectual<br />Rights</>} row="h-[163px]" labelBox="w-[92.6px]" box="ml-[13.2px] h-[162.8px] w-[380px] pt-[2px] pl-[2.2px]">
          <p className="whitespace-nowrap">
            This material is based upon work funded by the Exxon Valdez Oil Spill Trustee Council<br />
            under various projects. Any opinions, findings, conclusions, or recommendations<br />
            expressed herein are those of the author(s) and do not necessarily reflect the views or<br />
            positions of the Trustee Council.Funding and support also provided by: Univeristy of<br />
            Alaska, FairbanksPrince William Soun Science CenterStandard scientific norms for<br />
            attribution and credit should be followed when using this data including to the Owners,<br />
            Exxon Valdez Oil Spill Trustee Council and other sources of funding. Please let the Owner<br />
            know when this data is used.This data is licensed under CC0. The person who associated<br />
            a work with this deed has dedicated the work to the public domain by waiving all of his or<br />
            her rights to the work worldwide under copyright law, including all related and neighboring<br />
            rights, to the extent allowed by law. You can copy, modify, distribute and perform the work,<br />
            even for commercial purposes, all without asking permission.
          </p>
        </Field>
      </main>

      <aside className="flex w-[66px] shrink-0 flex-col">
        <svg width="66" height="382.5" viewBox="562 0 66 382.5" className="block shrink-0">
          <T x={594.8} y={27} s={8.6} fill="#808285">2 derivations</T>
          <path d="M562 81.1H568.3M577 57.6H568.3V104.5H577" fill="none" stroke={TEAL} strokeWidth="0.9" />
          <Head x={580} y={57.6} />
          <Head x={580} y={104.5} />
          <Folder x={596} y={56.8} ly={49.3} fy={61.5} label="H" />
          <Folder x={596} y={104} ly={97.6} fy={108.8} label="E. H." />
        </svg>
        <Widget comments={0} tags={0} className="ml-[13.5px]" top="top-[3px]" />
        <Widget comments={1} tags={3} className="mt-[1315.3px] ml-[18px]" top="top-[3px]" />
        <Widget comments={0} tags={1} className="mt-[1410px] ml-[16.3px]" top="top-[3px]" />
      </aside>
    </div>
  );
}
